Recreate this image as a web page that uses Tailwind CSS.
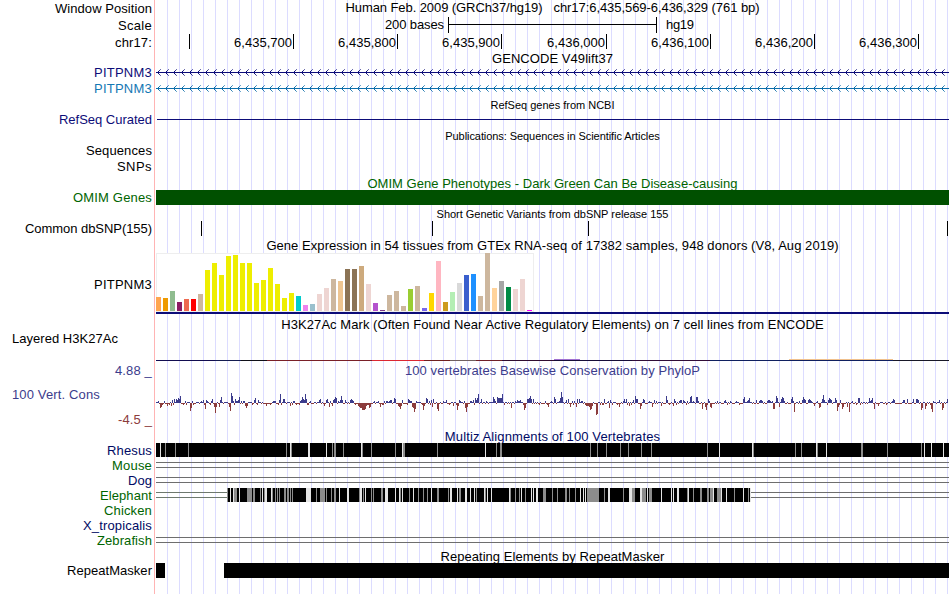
<!DOCTYPE html>
<html lang="en">
<head>
<meta charset="utf-8">
<title>Genome Browser</title>
<script src="https://cdn.jsdelivr.net/npm/@tailwindcss/browser@4"></script>
</head>
<body class="bg-white">
<main id="tracks" class="w-[950px] h-[594px] overflow-hidden flex flex-col text-[13px] leading-[15px] text-black whitespace-pre font-['Liberation_Sans',Arial,sans-serif]"></main>
<script>
const NAVY = 'text-[#0c0c78]', GREEN = 'text-[#006400]', BLUE = 'text-[#3c3c8c]';
const DATA = 'relative ml-px w-[793px] shrink-0 flex items-center justify-center bg-[repeating-linear-gradient(90deg,transparent_0_11px,#dcdcff_11px_12px)]';
const LABEL = 'w-[155px] shrink-0 border-r border-[#ffb4b4] pr-[2px] flex items-center justify-end';
const rect = (x, y, w, h, c) => `<rect x="${x}" y="${y}" width="${w}" height="${h}" fill="${c}"/>`;
// Drawings use browser-image x coordinates, with y relative to the row.
const svg = (h, body) => `<svg class="block shrink-0" width="793" height="${h}" viewBox="156 0 793 ${h}" shape-rendering="crispEdges">${body}</svg>`;
// Spread the letters of each caption over its column width.
const pen = document.createElement('canvas').getContext('2d');
const txt = (s, w, c = '') => {
  pen.font = (c === small ? '11px' : '13px') + ' "Liberation Sans", Arial, sans-serif';
  const extra = (w - pen.measureText(s).width) / s.length;
  return `<span class="inline-block ${c}" style="letter-spacing:${extra.toFixed(3)}px">${s}</span>`;
};
const row = (hc, label, data, lc = '', dc = '') => `<div class="flex shrink-0 ${hc}"><div class="${LABEL} ${lc}">${label}</div><div class="${DATA} ${dc}">${data}</div></div>`;
const small = 'text-[11px]';

const arrows = color => {
  let s = rect(156, 7, 793, 1, color);
  for (let x = 157; x < 949; x += 8)
    s += rect(x + 1, 6, 1, 1, color) + rect(x + 1, 8, 1, 1, color) + `<g opacity=".85">` + rect(x + 2, 5, 1, 1, color) + rect(x + 2, 9, 1, 1, color) + `</g><g opacity=".6">` + rect(x + 3, 4, 1, 1, color) + rect(x + 3, 10, 1, 1, color) + '</g>';
  return s;
};
const ruler = [['', 189], ['6,435,700', 293], ['6,435,800', 397], ['6,435,900', 501], ['6,436,000', 606], ['6,436,100', 710], ['6,436,200', 814], ['6,436,300', 918]]
  .map(([t, x]) => (t ? `<text x="${x - 59}" y="14" textLength="58" font-size="13">${t}</text>` : '') + rect(x, 1, 1, 15, '#000')).join('');

const tissues = [[14,'#ffa54f'],[13,'#ee9a00'],[20,'#8fbc8f'],[9,'#8b1c62'],[12,'#ee6a50'],[12,'#ff0000'],[17,'#cdb79e'],
  ...[41,48,36,55,56,48,48,28,31,43,27,13,18].map(h => [h, '#eeee00']),
  [15,'#00cdcd'],[6,'#ee82ee'],[7,'#9ac0cd'],[17,'#eed5d2'],[23,'#eed5d2'],[32,'#cdb79e'],[30,'#eec591'],[42,'#8b7355'],[42,'#8b7355'],[45,'#cdaa7d'],
  [27,'#eed5d2'],[8,'#b452cd'],[1,'#7a378b'],[16,'#cdb79e'],[20,'#cdb79e'],[5,'#cdb79e'],[22,'#9acd32'],[25,'#cdb79e'],[3,'#7a67ee'],[18,'#ffd700'],
  [50,'#ffb6c1'],[9,'#cd9b1d'],[19,'#b4eeb4'],[28,'#d9d9d9'],[36,'#3a5fcd'],[37,'#1e90ff'],[15,'#cdb79e'],[58,'#cdb79e'],[23,'#ffd39b'],[30,'#a6a6a6'],
  [24,'#008b45'],[22,'#eed5d2'],[32,'#eed5d2'],[1,'#ff00ff']];
const gtex = rect(156, 0, 378, 59, '#eeeeee') + rect(157, 1, 376, 57, '#fff')
  + tissues.map(([h, c], i) => rect(156 + i * 7, 58 - h, 5, h, c)).join('') + rect(156, 59, 793, 2, '#0c0c78');

const h3k = [[156,59,'#120c50'],[215,26,'#141c50'],[241,26,'#101018'],[267,105,'#7a2028'],[372,52,'#dc2832'],[424,26,'#702020'],[450,26,'#706060'],[476,26,'#702028'],[502,52,'#300c30'],[554,78,'#160c38'],[632,78,'#300c38'],[710,183,'#102060'],[893,56,'#181828']]
  .map(([x, w, c]) => rect(x, 28, w, 1, c)).join('') + rect(554, 27, 26, 1, '#a070d0') + rect(789, 27, 104, 1, '#f0c08c');

// Conservation scores: [origin x, offset in thirds of a pixel, height]
const peaks = [
 [150,[24,2,68,3,72,4,79,4,82,3,85,5,88,4,91,7,106,2,127,2,160,3,169,3,172,2,184,2,187,4,211,3,214,6,244,10,247,7,250,2,256,4,265,3,268,6,313,3,316,5,325,3,370,2,373,2,376,2,388,3,391,9,400,4,403,4,430,2,433,2,451,2,454,3,457,6,460,4,463,3,466,9,469,4,508,3,511,4,529,3,532,4,550,3,553,4,556,6,559,5,571,3,574,7,577,3,586,3,601,3,604,4,607,3,610,2,685,2,709,2,718,2,721,3,724,3,733,5,736,4,757,3,775,4,778,3,799,2,
  31,-5,34,-4,37,-2,52,-3,58,-2,64,-3,100,-2,121,-8,124,-5,166,-6,181,-2,193,-4,196,-10,199,-4,208,-4,238,-4,241,-8,286,-3,289,-5,292,-3,307,-2,349,-3,421,-3,475,-2,523,-3,538,-4,547,-3,625,-3,628,-4,631,-5,634,-5,637,-7,640,-7,643,-7,646,-6,649,-3,658,-5,661,-4,691,-4,697,-2,745,-3,748,-4,751,-6,754,-3,787,-4,790,-5,793,-9,796,-5]],
 [415,[34,5,37,4,49,3,55,4,70,3,94,3,133,3,166,2,169,2,175,3,181,5,184,3,187,5,190,9,199,4,235,6,238,4,241,2,247,6,250,5,253,5,256,5,259,5,262,9,307,3,316,3,337,4,340,4,343,5,346,7,349,4,355,4,391,2,418,6,421,4,433,2,436,5,439,11,442,6,454,3,460,4,466,3,487,4,493,4,568,4,586,3,628,4,634,4,655,3,661,7,664,4,667,4,685,4,688,3,718,3,754,7,757,3,778,4,799,3,
  1,-6,25,-7,28,-3,52,-4,67,-6,70,-8,115,-3,127,-7,130,-3,151,-5,154,-9,157,-4,289,-5,328,-7,331,-5,400,-4,466,-4,484,-4,505,-1,511,-2,514,-3,517,-3,520,-3,523,-4,526,-7,529,-6,532,-3,544,-12,547,-11,583,-5,613,-4,643,-3,676,-6,679,-3,712,-4,739,-3,775,-3]],
 [680,[1,3,4,3,10,3,31,6,34,7,49,6,52,6,85,4,136,3,190,4,193,6,208,5,205,3,229,3,238,2,241,3,244,3,247,2,265,3,268,3,283,5,289,7,292,5,304,4,307,6,310,5,313,2,334,4,337,6,367,3,370,6,373,4,376,3,385,3,388,4,391,3,427,4,430,8,433,3,445,3,448,5,451,4,454,3,466,5,469,3,481,3,517,2,535,5,538,5,568,5,577,5,574,3,640,4,643,3,670,3,673,3,682,4,700,4,709,4,712,4,715,3,778,3,802,4,
  67,-6,76,-4,79,-7,91,-4,94,-5,280,-6,283,-6,298,-4,343,-9,403,-3,418,-5,421,-4,472,-8,475,-4,487,-6,490,-4,502,-4,508,-9,583,-6,595,-3,725,-7,728,-5,736,-6,739,-3,754,-6,757,-9,787,-7,790,-5]]];
const score = {};
let seed = 41;
for (let x = 156; x < 948; x++) { seed = (seed * 1103515245 + 12345) % 2147483648; score[x] = [1, 1, 1, 2, -1, -1, -1, -2, -1, 1][Math.floor(seed / 65536) % 10]; }
for (const [ox, list] of peaks) for (let i = 0; i < list.length; i += 2) score[ox + Math.floor(list[i] / 3)] = list[i + 1];
const phylop = Object.entries(score).map(([x, s]) => s > 0 ? rect(x, 25 - s, 1, s, '#3c3c8c') : rect(x, 25, 1, -s, '#8c3c3c')).join('');

const G = '#8c8c8c', W = '#e4e4e4';
const stripes = (gray, white, h) => [[gray, G], [white, W]].map(([l, c]) => l.map(v => Array.isArray(v) ? rect(v[0], 0, v[1], h, c) : rect(v, 0, 1, h, c)).join('')).join('');
const rhesus = rect(156, 0, 793, 14, '#000') + stripes(
  [165,175,188,286,291,332,[334,2],343,362,371,395,[403,2],437,496,[500,2],590,597,606,620,628,641,651,707,753,795,801,817,[861,2],887,921],
  [160,290,[308,2],326,361,402,485,719,752,816,826,924,931,943], 14);
const gaps = (a, b) => rect(156, a, 793, 1, '#6e6e6e') + rect(156, b, 793, 1, '#6e6e6e');
const elephant = rect(156, 4, 71, 1, '#6e786e') + rect(156, 9, 71, 1, '#6e786e') + rect(751, 4, 198, 1, '#6e6e6e') + rect(751, 9, 198, 1, '#6e6e6e') + rect(227, 0, 523, 14, '#000') + stripes(
  [227,234,[235,2],[247,5],[253,2],260,264,272,275,277,279,[284,2],[287,2],290,292,316,[320,5],326,331,[334,2],359,363,371,373,[381,2],400,409,418,423,427,[437,2],448,[459,2],476,485,510,515,519,525,[543,3],552,557,[565,2],569,575,[587,12],604,623,[632,3],[642,4],[649,3],687,693,[700,2],[707,2],[710,3],[717,4],734,748],
  [230,233,239,262,[265,2],271,[306,5],339,[347,2],[360,2],365,[385,3],395,399,402,413,431,450,451,457,[465,2],470,474,484,487,491,509,521,531,533,[536,2],580,583,585,[608,2],[629,3],[640,2],647,661,671,673,[677,2],688,713,721,726,743,750], 14);

const down = 'pt-[2px]';
document.getElementById('tracks').innerHTML = [
  row('h-[17px]', txt('Window Position', 97), `<div class="flex gap-[11px]">${txt('Human Feb. 2009 (GRCh37/hg19)', 197)}${txt('chr17:6,435,569-6,436,329 (761 bp)', 206)}</div>`, '', 'pb-[2px]'),
  row('h-[16px]', txt('Scale', 34), svg(16, `<text x="385" y="12" textLength="59" font-size="13">200 bases</text><text x="666" y="12" textLength="28" font-size="13">hg19</text>` + rect(448, 0, 1, 16, '#000') + rect(656, 0, 1, 16, '#000') + rect(448, 7, 208, 1, '#000'))),
  row('h-[18px]', txt('chr17:', 37), svg(18, ruler)),
  row('h-[14px]', '', txt('GENCODE V49lift37', 121)),
  row('h-[16px]', txt('PITPNM3', 58, NAVY), svg(16, arrows('#0c0c78')), 'pb-px'),
  row('h-[16px]', txt('PITPNM3', 58, 'text-[#1478b4]'), svg(16, arrows('#0c6eaa')), 'pb-px'),
  row('h-[15px]', '', txt('RefSeq genes from NCBI', 124, small), '', down),
  row('h-[15px]', txt('RefSeq Curated', 93, NAVY), svg(15, rect(157, 7, 792, 1, '#0c0c78'))),
  row('h-[17px]', '', txt('Publications: Sequences in Scientific Articles', 215, small), '', down),
  row('h-[14px]', txt('Sequences', 66), '', 'pb-px'),
  row('h-[16px]', txt('SNPs', 35), ''),
  row('h-[16px]', '', txt('OMIM Gene Phenotypes - Dark Green Can Be Disease-causing', 370, GREEN), '', down),
  row('h-[15px]', txt('OMIM Genes', 79, GREEN), svg(15, rect(156, 0, 793, 15, '#005000'))),
  row('h-[16px]', '', txt('Short Genetic Variants from dbSNP release 155', 232, small), '', down),
  row('h-[15px]', txt('Common dbSNP(155)', 127), svg(15, [201, 432, 588, 947].map(x => rect(x, 0, 1, 15, '#000')).join(''))),
  row('h-[17px]', '', txt('Gene Expression in 54 tissues from GTEx RNA-seq of 17382 samples, 948 donors (V8, Aug 2019)', 573), '', down),
  row('h-[62px]', txt('PITPNM3', 58), svg(62, gtex)),
  row('h-[17px]', '', txt('H3K27Ac Mark (Often Found Near Active Regulatory Elements) on 7 cell lines from ENCODE', 543), '', down),
  row('h-[31px]', `<div class="w-full h-full pl-[12px] leading-[13px]">${txt('Layered H3K27Ac', 106)}</div>`, svg(31, h3k)),
  row('h-[15px]', txt('4.88 _', 37, BLUE), txt('100 vertebrates Basewise Conservation by PhyloP', 295, BLUE)),
  row('h-[51px]', `<div class="w-full h-full pl-[12px] pt-[9px] pb-[2px] flex flex-col justify-between"><div>${txt('100 Vert. Cons', 88, BLUE)}</div><div class="self-end">${txt('-4.5 _', 34, 'text-[#8c3c3c]')}</div></div>`, svg(51, phylop)),
  row('h-[14px]', '', txt('Multiz Alignments of 100 Vertebrates', 216, 'text-[#000a64]')),
  row('h-[15px]', txt('Rhesus', 45, 'text-[#000a64]'), `<div class="h-full">${svg(15, rhesus)}</div>`),
  row('h-[15px]', txt('Mouse', 40, GREEN), svg(15, gaps(4, 9))),
  row('h-[15px]', txt('Dog', 24, 'text-[#000a64]'), svg(15, gaps(4, 9))),
  row('h-[15px]', txt('Elephant', 52, GREEN), svg(15, elephant)),
  row('h-[15px]', txt('Chicken', 48, GREEN), ''),
  row('h-[15px]', txt('X_tropicalis', 69, 'text-[#000a64]'), ''),
  row('h-[15px]', txt('Zebrafish', 55, GREEN), svg(15, gaps(4, 9))),
  row('h-[15px]', '', txt('Repeating Elements by RepeatMasker', 224), '', down),
  row('h-[15px]', txt('RepeatMasker', 85), svg(15, rect(156, 0, 9, 15, '#000') + rect(224, 0, 725, 15, '#000'))),
  row('h-[16px]', '', '')
].join('');
</script>
</body>
</html>
